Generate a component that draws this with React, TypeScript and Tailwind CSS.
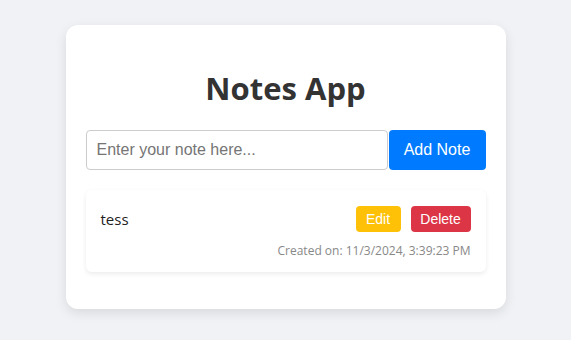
import { useState } from 'react'

type Note = { id: number; text: string; createdAt: string }

export default function App() {
  const [text, setText] = useState('')
  const [notes] = useState<Note[]>([
    { id: 1, text: 'tess', createdAt: '11/3/2024, 3:39:23 PM' },
  ])

  return (
    <div className="min-h-screen w-full bg-[#f0f2f5] flex justify-center pt-[25px] font-['Open_Sans',sans-serif]">
      <div className="w-[440px] h-[284px] bg-white rounded-xl shadow-[0_4px_12px_rgba(0,0,0,0.1)] px-5 pt-5">
        <h1 className="text-center text-[31px] font-bold text-[#333] leading-[42px] mt-[22px] mb-[21px]">
          Notes App
        </h1>

        <div className="flex">
          <input
            value={text}
            onChange={(e) => setText(e.target.value)}
            placeholder="Enter your note here..."
            className="flex-1 h-10 border border-[#ccc] rounded px-[10px] text-base font-['Liberation_Sans',sans-serif] placeholder:text-[#757575] outline-none"
          />
          <button className="ml-px w-[97px] h-10 bg-[#007bff] text-white rounded text-base font-['Liberation_Sans',sans-serif]">
            Add Note
          </button>
        </div>

        <div className="mt-5">
          {notes.map((note) => (
            <div
              key={note.id}
              className="h-[82px] rounded-md shadow-[0_2px_5px_rgba(0,0,0,0.08)] px-[15px] pt-[15px]"
            >
              <div className="flex items-center justify-between h-[27px]">
                <span className="text-[15px] text-[#222] pt-[2px]">{note.text}</span>
                <div className="flex gap-[10px] font-['Liberation_Sans',sans-serif]">
                  <button className="w-[45px] h-[26px] bg-[#ffc107] text-white text-sm rounded">Edit</button>
                  <button className="w-[60px] h-[26px] bg-[#dc3545] text-white text-sm rounded">Delete</button>
                </div>
              </div>
              <div className="text-right text-xs text-[#888] mt-[11px]">
                Created on: {note.createdAt}
              </div>
            </div>
          ))}
        </div>
      </div>
    </div>
  )
}
